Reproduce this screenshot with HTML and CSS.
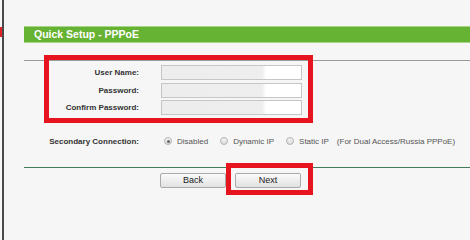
FILE: index.html
```html
<!DOCTYPE html>
<html lang="en">
<head>
    <meta charset="UTF-8">
    <meta name="viewport" content="width=device-width, initial-scale=1.0">
    <title>Quick Setup - PPPoE</title>
    <link rel="stylesheet" href="styles.css">
</head>
<body>
    <div class="edge-mark"></div>
    <div class="page">
        <div class="title-bar">Quick Setup - PPPoE</div>
        <div class="rule"></div>

        <div class="fields">
            <label for="user">User Name:</label>
            <input type="text" id="user">
            <label for="pass">Password:</label>
            <input type="password" id="pass">
            <label for="confirm">Confirm Password:</label>
            <input type="password" id="confirm">
        </div>

        <div class="secondary">
            <span class="sec-label">Secondary Connection:</span>
            <div class="options">
                <span class="radio checked"></span><span class="opt">Disabled</span>
                <span class="radio"></span><span class="opt">Dynamic IP</span>
                <span class="radio"></span><span class="opt">Static IP</span>
                <span class="note">(For Dual Access/Russia PPPoE)</span>
            </div>
        </div>

        <div class="rule-green"></div>

        <div class="buttons">
            <button class="btn">Back</button>
            <button class="btn">Next</button>
        </div>

        <div class="highlight highlight-fields"></div>
        <div class="highlight highlight-next"></div>
    </div>
</body>
</html>
```

FILE: styles.css
```css
body {
    margin: 0;
    background: #f6f6f6;
    font-family: 'Liberation Sans', Arial, sans-serif;
    height: 240px;
    overflow: hidden;
}
.edge-mark {
    position: absolute;
    left: 0;
    top: 27px;
    width: 2px;
    height: 10px;
    background: #e0222a;
}
.page {
    position: relative;
    margin-left: 2px;
    border-left: 2px solid #4a4a4a;
    height: 240px;
    padding: 26px 0 0 20px;
    box-sizing: border-box;
}
.title-bar {
    height: 17px;
    box-sizing: border-box;
    background: #66b232;
    border-top: 1px solid #a6d68a;
    border-bottom: 1px solid #a6d68a;
    color: #fff;
    font-weight: bold;
    font-size: 10.5px;
    line-height: 15px;
    padding-left: 10px;
}
.rule {
    margin-top: 17px;
    height: 1px;
    background: #9a9a9a;
}
.fields {
    display: grid;
    grid-template-columns: 115px 141px;
    column-gap: 22px;
    row-gap: 2.5px;
    margin-top: 4px;
    align-items: center;
}
.fields label {
    text-align: right;
    font-size: 8px;
    font-weight: bold;
    color: #333;
}
.fields input {
    height: 15px;
    box-sizing: border-box;
    border: 1px solid #c6c6c6;
    background: linear-gradient(to right, #ededed 0, #eeeeee 72%, #fff 75%);
    padding: 0;
    margin: 0;
}
.secondary {
    display: grid;
    grid-template-columns: 115px auto;
    column-gap: 25px;
    align-items: center;
    margin-top: 20px;
    height: 12px;
}
.sec-label {
    text-align: right;
    font-size: 8px;
    font-weight: bold;
    color: #333;
}
.options {
    display: flex;
    align-items: center;
    font-size: 8px;
    color: #555;
}
.radio {
    width: 8px;
    height: 8px;
    border-radius: 50%;
    border: 1px solid #b4b4b4;
    background: linear-gradient(#f4f4f4, #dcdcdc);
    box-sizing: border-box;
    margin-right: 5px;
    display: flex;
    align-items: center;
    justify-content: center;
}
.radio.checked::after {
    content: '';
    width: 3px;
    height: 3px;
    border-radius: 50%;
    background: #666;
}
.opt {
    margin-right: 12px;
}
.note {
    margin-left: -4px;
}
.rule-green {
    margin-top: 20px;
    height: 1px;
    background: #3f7d5c;
}
.buttons {
    display: flex;
    gap: 9px;
    margin: 5px 0 0 136px;
}
.btn {
    width: 66px;
    height: 15px;
    padding: 0;
    border: 1px solid #a9a9a9;
    border-radius: 2px;
    background: linear-gradient(#fbfbfb, #e1e1e1);
    font-family: 'Liberation Sans', Arial, sans-serif;
    font-size: 9px;
    color: #222;
    line-height: 13px;
}
.highlight {
    position: absolute;
    border: 5px solid #e5141e;
    box-sizing: border-box;
}
.highlight-fields {
    left: 40px;
    top: 55px;
    width: 269px;
    height: 68px;
}
.highlight-next {
    left: 222px;
    top: 163px;
    width: 87px;
    height: 32px;
}
```
